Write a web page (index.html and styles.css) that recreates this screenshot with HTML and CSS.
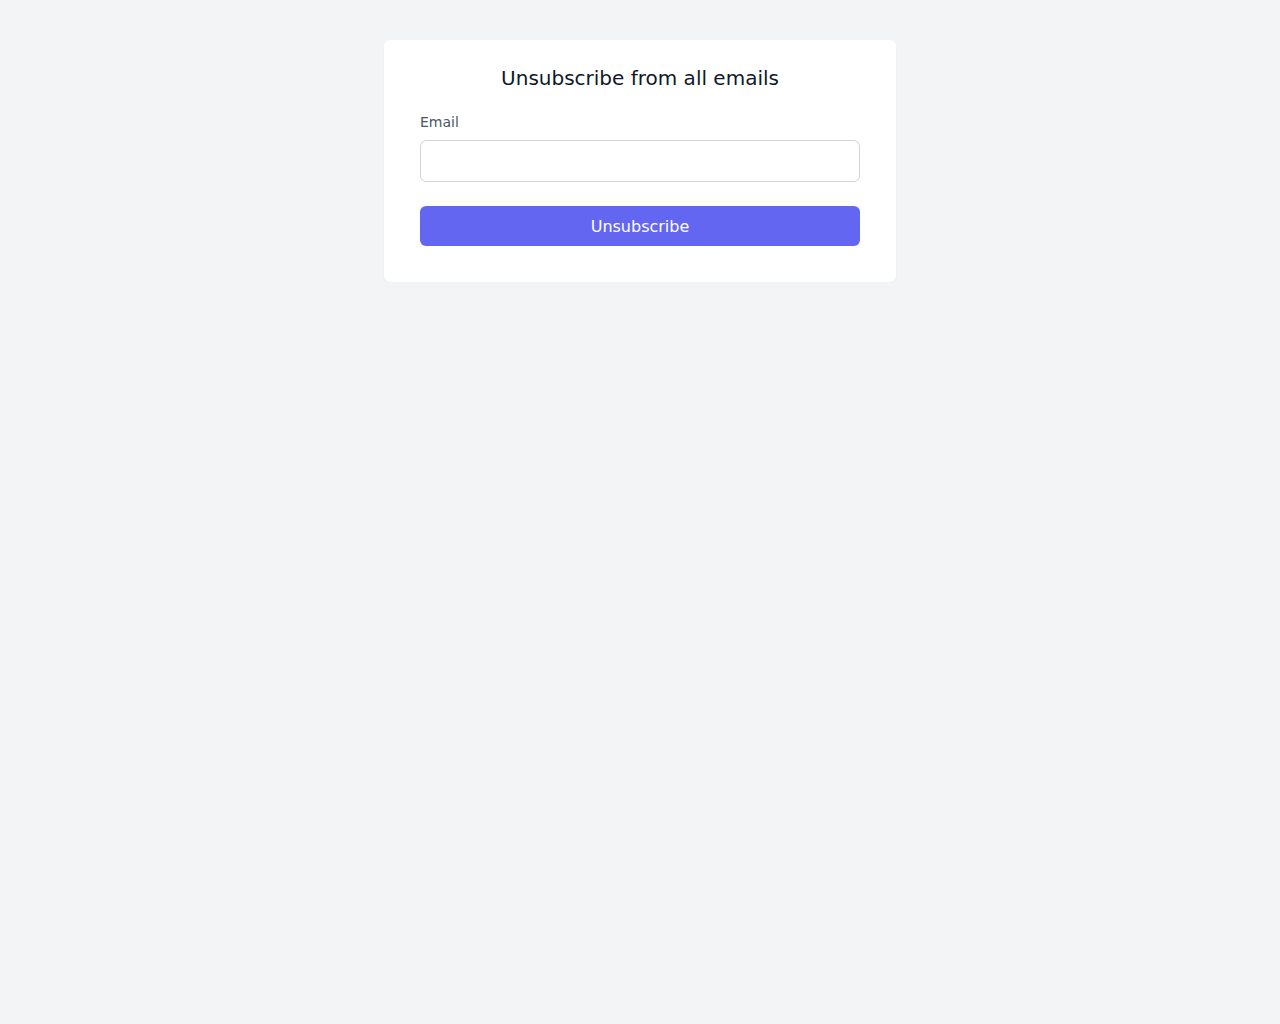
FILE: index.html
```html
<!DOCTYPE html>
<html lang="en">
<head>
    <meta charset="UTF-8">
    <meta name="viewport" content="width=device-width, initial-scale=1.0">
    <title>Unsubscribe</title>
    <link rel="stylesheet" href="styles.css">
</head>
<body>
    <div class="card">
        <h1 class="card-title">Unsubscribe from all emails</h1>

        <form class="unsub-form">
            <div class="form-group">
                <label for="email">Email</label>
                <input type="email" id="email">
            </div>

            <button type="button" id="unsub-btn">Unsubscribe</button>
        </form>
    </div>
</body>
</html>
```

FILE: styles.css
```css
*{
    margin:0;
    padding:0;
    box-sizing: border-box;
}

body {
    background-color: #f3f4f6;
    font-family: "DejaVu Sans", sans-serif;
    padding-top: 40px;
}

.card {
    width: 512px;
    margin: 0 auto;
    background-color: white;
    border-radius: 6px;
    padding: 24px 36px 36px;
    box-shadow: 0 1px 2px rgba(0, 0, 0, 0.05);
}

.card-title {
    font-size: 20px;
    line-height: 28px;
    font-weight: normal;
    text-align: center;
    color: #111827;
    margin-bottom: 20px;
}

.form-group > label {
    display: block;
    font-size: 14px;
    line-height: 20px;
    color: #4b5563;
    margin-bottom: 8px;
}

.form-group > input {
    display: block;
    width: 100%;
    height: 42px;
    border: 1px solid #d1d5db;
    border-radius: 6px;
    padding: 0 12px;
    font-size: 16px;
    font-family: inherit;
    outline: none;
}

#unsub-btn {
    display: block;
    width: 100%;
    height: 40px;
    margin-top: 24px;
    border: none;
    border-radius: 6px;
    background-color: #6366f1;
    color: white;
    font-size: 16px;
    font-family: inherit;
}
```
